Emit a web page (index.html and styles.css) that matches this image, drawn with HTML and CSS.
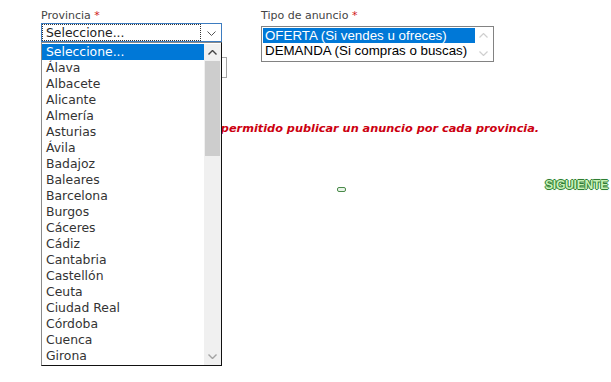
FILE: index.html
```html
<!DOCTYPE html>
<html lang="es">
<head>
<meta charset="utf-8">
<title>Anuncio</title>
<link rel="stylesheet" href="styles.css">
</head>
<body>
<div class="page">
  <div class="top">
    <div class="field prov">
      <div class="label">Provincia <span class="req">*</span></div>
      <div class="select">
        <span class="sel-text">Seleccione...</span>
        <svg class="chev" width="9" height="5" viewBox="0 0 9 5"><path d="M0.5 0.5 L4.5 4.5 L8.5 0.5" fill="none" stroke="#555" stroke-width="1"/></svg>
      </div>
      <div class="input"></div>
      <div class="popup">
        <ul class="opts">
          <li class="on">Seleccione...</li>
          <li>Álava</li>
          <li>Albacete</li>
          <li>Alicante</li>
          <li>Almería</li>
          <li>Asturias</li>
          <li>Ávila</li>
          <li>Badajoz</li>
          <li>Baleares</li>
          <li>Barcelona</li>
          <li>Burgos</li>
          <li>Cáceres</li>
          <li>Cádiz</li>
          <li>Cantabria</li>
          <li>Castellón</li>
          <li>Ceuta</li>
          <li>Ciudad Real</li>
          <li>Córdoba</li>
          <li>Cuenca</li>
          <li>Girona</li>
        </ul>
        <div class="sbar">
          <div class="sbtn"><svg width="9" height="5" viewBox="0 0 9 5"><path d="M0.5 4.5 L4.5 0.5 L8.5 4.5" fill="none" stroke="#444" stroke-width="1.4"/></svg></div>
          <div class="track"><div class="thumb"></div></div>
          <div class="sbtn"><svg width="9" height="5" viewBox="0 0 9 5"><path d="M0.5 0.5 L4.5 4.5 L8.5 0.5" fill="none" stroke="#a3a3a3" stroke-width="1.4"/></svg></div>
        </div>
      </div>
    </div>
    <div class="field tipo">
      <div class="label">Tipo de anuncio <span class="req">*</span></div>
      <div class="listbox">
        <ul class="lopts">
          <li class="on">OFERTA (Si vendes u ofreces)</li>
          <li>DEMANDA (Si compras o buscas)</li>
        </ul>
        <div class="lbar">
          <svg width="9" height="5" viewBox="0 0 9 5"><path d="M0.5 4.5 L4.5 0.5 L8.5 4.5" fill="none" stroke="#cfcfcf" stroke-width="1.2"/></svg>
          <svg width="9" height="5" viewBox="0 0 9 5"><path d="M0.5 0.5 L4.5 4.5 L8.5 0.5" fill="none" stroke="#cfcfcf" stroke-width="1.2"/></svg>
        </div>
      </div>
    </div>
  </div>
  <p class="warn">Sólo está permitido publicar un anuncio por cada provincia.</p>
  <div class="actions">
    <button class="mini" type="button"></button>
    <span class="next">SIGUIENTE</span>
  </div>
</div>
</body>
</html>
```
FILE: styles.css
```css
html, body { margin: 0; padding: 0; background: #fff; }
body { font-family: "DejaVu Sans", Verdana, sans-serif; }
.page { padding: 8px 0 0 41px; min-height: 382px; box-sizing: border-box; overflow: hidden; }
.top { display: flex; gap: 40px; align-items: flex-start; }
.field { display: flex; flex-direction: column; }
.prov { width: 180px; position: relative; }
.label { font-size: 11px; line-height: 16px; color: #444; height: 15px; }
.req { color: #d01818; }
.select {
  height: 19px; box-sizing: border-box; width: 181px;
  border: 1px solid #3d7cc0;
  display: flex; align-items: center; justify-content: space-between;
  padding: 0 5px 0 1px;
}
.sel-text {
  font-size: 12.4px; color: #222; line-height: 15px;
  outline: 1px dotted #333; outline-offset: 0;
  width: 157px; padding-left: 3px; box-sizing: border-box;
}
.chev { margin-top: 1px; }
.input {
  margin-top: 15px; width: 186px; height: 21px; box-sizing: border-box;
  border: 1px solid #a5a5a5;
}
.popup {
  position: absolute; left: 0; top: 34px;
  width: 181px; height: 324px; box-sizing: border-box;
  border: 1px solid #111; border-left-color: #8a8a8a; border-top-color: #8a8a8a;
  background: #fff; display: flex; padding-top: 1px;
}
.opts { list-style: none; margin: 0; padding: 0; flex: 1; }
.opts li {
  height: 16px; line-height: 16px; font-size: 12.4px; color: #333;
  padding-left: 4px;
}
.opts li.on { background: #0078d7; color: #fff; }
.sbar { width: 17px; display: flex; flex-direction: column; background: #f0f0f0; }
.sbtn { height: 17px; display: flex; align-items: center; justify-content: center; }
.track { flex: 1; }
.thumb { height: 95px; background: #cdcdcd; width: 15px; margin: 0 auto 0 1px; }
.tipo { width: 240px; }
.listbox {
  margin-top: 3px; width: 233px; height: 36px; box-sizing: border-box;
  border: 1px solid #828282; display: flex; padding: 1px;
}
.lopts { list-style: none; margin: 0; padding: 0; flex: 1; }
.lopts li {
  font-family: "Liberation Sans", Arial, sans-serif; font-size: 13.33px;
  height: 15px; line-height: 15px; padding-left: 2px; color: #000;
}
.lopts li.on { background: #0078d7; color: #fff; }
.lbar { width: 17px; display: flex; flex-direction: column; justify-content: space-between; align-items: center; padding: 5px 0 4px; box-sizing: border-box; }
.warn {
  margin: 44px 0 0 117px; font-size: 11.3px; font-weight: bold; font-style: italic;
  color: #cc0010; line-height: 14px;
}
.actions { display: flex; align-items: center; margin-top: 42px; padding-left: 296px; }
.mini {
  width: 9px; height: 5px; padding: 0; margin: 8px 0 0 0;
  border: 1px solid #4a8a4a; border-radius: 2px; background: #e8f4e8;
}
.next {
  margin-left: 199px;
  font-family: "Liberation Sans", Arial, sans-serif; font-weight: bold; font-size: 12.2px;
  color: #c8f0b8; letter-spacing: -0.3px;
  text-shadow: 1px 0 0 #2e7d32, -1px 0 0 #2e7d32, 0 1px 0 #2e7d32, 0 -1px 0 #2e7d32, 0 0 2px #6c6;
}
```
